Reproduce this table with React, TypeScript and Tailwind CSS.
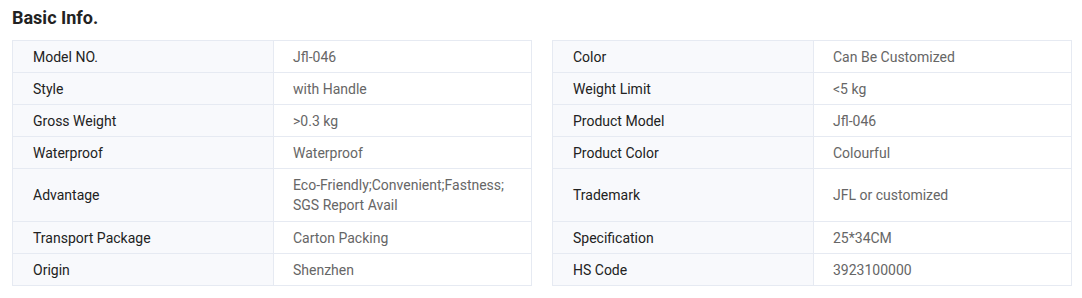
type Spec = [string, string]

const rows: [Spec, Spec][] = [
  [["Model NO.", "Jfl-046"], ["Color", "Can Be Customized"]],
  [["Style", "with Handle"], ["Weight Limit", "<5 kg"]],
  [["Gross Weight", ">0.3 kg"], ["Product Model", "Jfl-046"]],
  [["Waterproof", "Waterproof"], ["Product Color", "Colourful"]],
  [["Advantage", "Eco-Friendly;Convenient;Fastness; SGS Report Avail"], ["Trademark", "JFL or customized"]],
  [["Transport Package", "Carton Packing"], ["Specification", "25*34CM"]],
  [["Origin", "Shenzhen"], ["HS Code", "3923100000"]],
]

const Half = ({ spec, first }: { spec: Spec; first: boolean }) => (
  <div className={`w-[520px] flex border-x border-b border-[#e6eaf2] ${first ? "border-t" : ""}`}>
    <div className="w-[260px] shrink-0 bg-[#f8f9fc] pl-5 pr-4 py-[5.5px] flex items-center text-[#222]">{spec[0]}</div>
    <div className="flex-1 border-l border-[#e6eaf2] pl-[19px] pr-4 py-[5.5px] flex items-center text-[#666]">{spec[1]}</div>
  </div>
)

export default function App() {
  return (
    <div className="bg-white pl-3 pt-2 pb-3" style={{ fontFamily: "Roboto, 'Liberation Sans', sans-serif" }}>
      <h2 className="text-[18px] leading-5 font-bold text-[#222] mb-3">Basic Info.</h2>
      <div className="flex flex-col text-[14px] leading-5">
        {rows.map(([a, b], i) => (
          <div key={a[0]} className={`flex gap-5 ${i === 4 ? "min-h-[53px]" : ""}`}>
            <Half spec={a} first={i === 0} />
            <Half spec={b} first={i === 0} />
          </div>
        ))}
      </div>
    </div>
  )
}
